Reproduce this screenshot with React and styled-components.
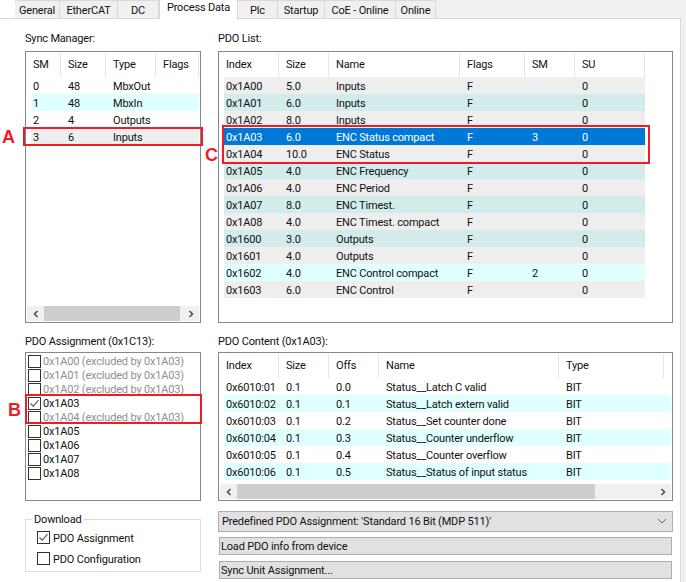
import React from "react";
import styled, { createGlobalStyle } from "styled-components";

const GlobalStyle = createGlobalStyle`
  html, body {
    margin: 0;
    padding: 0;
    background: #ffffff;
  }
  body {
    font-family: Roboto, "Noto Sans", sans-serif;
    font-size: 11px;
    letter-spacing: -0.18px;
    color: #111111;
  }
`;

const Page = styled.div`
  position: relative;
  width: 686px;
  height: 582px;
  overflow: hidden;
  background: #f0f0f0;
`;

const TabStrip = styled.div`
  display: flex;
  align-items: flex-start;
  height: 18px;
  padding-left: 15px;
  background: linear-gradient(to right, #ffffff 15px, #f0f0f0 15px);
`;

const Tab = styled.div`
  box-sizing: border-box;
  width: ${(p) => p.$w}px;
  height: 19px;
  line-height: ${(p) => (p.$active ? 16 : 19)}px;
  text-align: center;
  white-space: nowrap;
  background: ${(p) => (p.$active ? "#ffffff" : "#f0f0f0")};
  border: 1px solid #d9d9d9;
  border-left: ${(p) => (p.$active ? "1px solid #d9d9d9" : "none")};
  border-top: ${(p) => (p.$active ? "none" : "1px solid #d9d9d9")};
  border-bottom: ${(p) => (p.$active ? "none" : "1px solid #d9d9d9")};
  position: relative;
  z-index: ${(p) => (p.$active ? 2 : 1)};
`;

const Panel = styled.div`
  box-sizing: border-box;
  width: 681px;
  height: 564px;
  background: #ffffff;
  border-top: 1px solid #d9d9d9;
  border-right: 1px solid #d9d9d9;
  padding: 11px 7px 0 25px;
  display: grid;
  grid-template-columns: 176px 455px;
  column-gap: 17px;
  grid-template-rows: 293px 1fr;
  row-gap: 10px;
`;

const Section = styled.section`
  display: flex;
  flex-direction: column;
  min-width: 0;
`;

const Label = styled.div`
  height: 16px;
  line-height: 18px;
  margin-bottom: ${(p) => p.$gap}px;
  white-space: nowrap;
`;

const Box = styled.div`
  box-sizing: border-box;
  height: ${(p) => p.$h}px;
  background: #ffffff;
  border: 1px solid #828790;
  padding-left: 5px;
  display: flex;
  flex-direction: column;
  position: relative;
`;

const HeaderRow = styled.div`
  display: flex;
  height: 25px;
  padding-top: 1px;
  box-sizing: border-box;
  flex: none;
`;

const HeaderCell = styled.div`
  box-sizing: border-box;
  width: ${(p) => p.$w}px;
  padding-left: ${(p) => (p.$first ? 2 : 7)}px;
  line-height: 24px;
  height: 24px;
  border-right: 1px solid #e5e5e5;
  white-space: nowrap;
`;

const Rows = styled.div`
  flex: 1;
  min-height: 0;
`;

const Row = styled.div`
  display: flex;
  height: 17px;
  width: ${(p) => p.$w}px;
  line-height: 19px;
  background: ${(p) => p.$bg};
  color: ${(p) => (p.$selected ? "#ffffff" : "#111111")};
`;

const Cell = styled.div`
  box-sizing: border-box;
  width: ${(p) => p.$w}px;
  padding-left: ${(p) => (p.$first ? 2 : 7)}px;
  white-space: nowrap;
`;

const ScrollBar = styled.div`
  display: flex;
  align-items: stretch;
  height: 15px;
  margin: 0 1px 1px -4px;
  background: #f0f0f0;
  flex: none;
`;

const ScrollBtn = styled.div`
  width: 17px;
  display: flex;
  align-items: center;
  justify-content: center;
  flex: none;
`;

const Thumb = styled.div`
  background: #cdcdcd;
  width: ${(p) => p.$w}px;
  flex: none;
`;

const ScrollSpace = styled.div`
  flex: 1;
`;

const CheckList = styled.div`
  display: flex;
  flex-direction: column;
  padding-top: 1px;
  margin-left: -3px;
`;

const CheckItem = styled.div`
  display: flex;
  align-items: center;
  gap: 2px;
  height: 14px;
  white-space: nowrap;
  color: ${(p) => (p.$muted ? "#8f8f8f" : "#111111")};
`;

const CheckBox = styled.span`
  box-sizing: border-box;
  width: 13px;
  height: 13px;
  flex: none;
  border: 1px solid #333333;
  background: #ffffff;
  display: flex;
  align-items: center;
  justify-content: center;
`;

const RightStack = styled.div`
  display: flex;
  flex-direction: column;
  padding-top: 10px;
`;

const Combo = styled.div`
  box-sizing: border-box;
  height: 21px;
  background: #e1e1e1;
  border: 1px solid #adadad;
  display: flex;
  align-items: center;
  justify-content: space-between;
  padding: 0 5px 1px 3px;
  white-space: nowrap;
`;

const WideButton = styled.div`
  box-sizing: border-box;
  height: 18px;
  margin: ${(p) => p.$top}px 1px 0;
  background: #e1e1e1;
  border: 1px solid #adadad;
  line-height: 18px;
  padding-left: 1px;
  white-space: nowrap;
`;

const GroupBox = styled.fieldset`
  box-sizing: border-box;
  height: 61px;
  margin: 10px 0 0;
  padding: 1px 0 0 11px;
  border: 1px solid #dcdcdc;
  min-width: 0;
`;

const GroupTitle = styled.legend`
  padding: 2px 2px 0;
  margin-left: -5px;
  line-height: 14px;
`;

const GroupItem = styled.div`
  display: flex;
  align-items: center;
  gap: 3px;
  height: 21px;
  white-space: nowrap;

  ${CheckBox} {
    margin-top: -2px;
  }
`;

const Marker = styled.div`
  position: absolute;
  box-sizing: border-box;
  left: ${(p) => p.$x}px;
  top: ${(p) => p.$y}px;
  width: ${(p) => p.$w}px;
  height: ${(p) => p.$h}px;
  border: 2px solid #ee1c25;
  pointer-events: none;
`;

const MarkerLetter = styled.div`
  position: absolute;
  left: ${(p) => p.$x}px;
  top: ${(p) => p.$y}px;
  color: #ee1c25;
  font-family: "Liberation Sans", sans-serif;
  font-weight: bold;
  font-size: 18px;
  letter-spacing: 0;
  line-height: 18px;
`;

const WHITE = "#ffffff";
const CYAN = "#e0ffff";
const GREY = "#eeeeee";
const TEAL = "#d2ecec";
const BLUE = "#0078d7";

const syncCols = [30, 45, 50, 43];
const syncHead = ["SM", "Size", "Type", "Flags"];
const syncRows = [
  { bg: WHITE, c: ["0", "48", "MbxOut", ""] },
  { bg: CYAN, c: ["1", "48", "MbxIn", ""] },
  { bg: WHITE, c: ["2", "4", "Outputs", ""] },
  { bg: GREY, c: ["3", "6", "Inputs", ""] },
];

const pdoCols = [55, 50, 131, 65, 50, 70];
const pdoHead = ["Index", "Size", "Name", "Flags", "SM", "SU"];
const pdoRows = [
  { bg: GREY, c: ["0x1A00", "5.0", "Inputs", "F", "", "0"] },
  { bg: TEAL, c: ["0x1A01", "6.0", "Inputs", "F", "", "0"] },
  { bg: GREY, c: ["0x1A02", "8.0", "Inputs", "F", "", "0"] },
  { bg: BLUE, selected: true, c: ["0x1A03", "6.0", "ENC Status compact", "F", "3", "0"] },
  { bg: GREY, c: ["0x1A04", "10.0", "ENC Status", "F", "", "0"] },
  { bg: TEAL, c: ["0x1A05", "4.0", "ENC Frequency", "F", "", "0"] },
  { bg: GREY, c: ["0x1A06", "4.0", "ENC Period", "F", "", "0"] },
  { bg: TEAL, c: ["0x1A07", "8.0", "ENC Timest.", "F", "", "0"] },
  { bg: GREY, c: ["0x1A08", "4.0", "ENC Timest. compact", "F", "", "0"] },
  { bg: TEAL, c: ["0x1600", "3.0", "Outputs", "F", "", "0"] },
  { bg: GREY, c: ["0x1601", "4.0", "Outputs", "F", "", "0"] },
  { bg: CYAN, c: ["0x1602", "4.0", "ENC Control compact", "F", "2", "0"] },
  { bg: GREY, c: ["0x1603", "6.0", "ENC Control", "F", "", "0"] },
];

const contentCols = [55, 50, 50, 180, 105];
const contentHead = ["Index", "Size", "Offs", "Name", "Type"];
const contentRows = [
  ["0x6010:01", "0.1", "0.0", "Status__Latch C valid", "BIT"],
  ["0x6010:02", "0.1", "0.1", "Status__Latch extern valid", "BIT"],
  ["0x6010:03", "0.1", "0.2", "Status__Set counter done", "BIT"],
  ["0x6010:04", "0.1", "0.3", "Status__Counter underflow", "BIT"],
  ["0x6010:05", "0.1", "0.4", "Status__Counter overflow", "BIT"],
  ["0x6010:06", "0.1", "0.5", "Status__Status of input status", "BIT"],
].map((c, i) => ({ bg: i % 2 ? CYAN : WHITE, c }));

const assignments = [
  { id: "0x1A00", excluded: true },
  { id: "0x1A01", excluded: true },
  { id: "0x1A02", excluded: true },
  { id: "0x1A03", checked: true },
  { id: "0x1A04", excluded: true },
  { id: "0x1A05" },
  { id: "0x1A06" },
  { id: "0x1A07" },
  { id: "0x1A08" },
];

const tabs = [
  ["General", 45],
  ["EtherCAT", 58],
  ["DC", 41],
  ["Process Data", 79, true],
  ["Plc", 40],
  ["Startup", 47],
  ["CoE - Online", 71],
  ["Online", 40],
];

const CHEVRONS = {
  left: "M5.5 1 L2.5 4 L5.5 7",
  right: "M2.5 1 L5.5 4 L2.5 7",
};

const Chevron = ({ dir }) => (
  <svg width="8" height="8" viewBox="0 0 8 8">
    <path d={CHEVRONS[dir]} fill="none" stroke="#505050" strokeWidth="1.6" />
  </svg>
);

const ComboArrow = () => (
  <svg width="10" height="6" viewBox="0 0 10 6">
    <path d="M1 1 L5 5 L9 1" fill="none" stroke="#606060" strokeWidth="1" />
  </svg>
);

const Tick = () => (
  <svg width="11" height="11" viewBox="0 0 11 11">
    <path d="M1.5 5.5 L4.2 8.2 L9.5 2.2" fill="none" stroke="#555555" strokeWidth="1.1" />
  </svg>
);

const Scroll = ({ thumb }) => (
  <ScrollBar>
    <ScrollBtn>
      <Chevron dir="left" />
    </ScrollBtn>
    <Thumb $w={thumb} />
    <ScrollSpace />
    <ScrollBtn>
      <Chevron dir="right" />
    </ScrollBtn>
  </ScrollBar>
);

const ListTable = ({ cols, head, rows, rowWidth, height, thumb }) => (
  <Box $h={height}>
    <HeaderRow>
      {head.map((h, i) => (
        <HeaderCell key={h} $w={cols[i]} $first={i === 0}>
          {h}
        </HeaderCell>
      ))}
    </HeaderRow>
    <Rows>
      {rows.map((r) => (
        <Row key={r.c[0]} $w={rowWidth} $bg={r.bg} $selected={r.selected}>
          {r.c.map((v, i) => (
            <Cell key={i} $w={cols[i]} $first={i === 0}>
              {v}
            </Cell>
          ))}
        </Row>
      ))}
    </Rows>
    {thumb > 0 && <Scroll thumb={thumb} />}
  </Box>
);

export default function App() {
  return (
    <Page>
      <GlobalStyle />
      <TabStrip>
        {tabs.map(([name, w, active]) => (
          <Tab key={name} $w={w} $active={active}>
            {name}
          </Tab>
        ))}
      </TabStrip>
      <Panel>
        <Section>
          <Label $gap={5}>Sync Manager:</Label>
          <ListTable cols={syncCols} head={syncHead} rows={syncRows} rowWidth={168} height={272} thumb={136} />
        </Section>
        <Section>
          <Label $gap={5}>PDO List:</Label>
          <ListTable cols={pdoCols} head={pdoHead} rows={pdoRows} rowWidth={421} height={272} />
        </Section>
        <Section>
          <Label $gap={3}>PDO Assignment (0x1C13):</Label>
          <Box $h={149}>
            <CheckList>
              {assignments.map((a) => (
                <CheckItem key={a.id} $muted={a.excluded}>
                  <CheckBox>{a.checked && <Tick />}</CheckBox>
                  {a.excluded ? `${a.id} (excluded by 0x1A03)` : a.id}
                </CheckItem>
              ))}
            </CheckList>
          </Box>
          <GroupBox>
            <GroupTitle>Download</GroupTitle>
            <GroupItem>
              <CheckBox>
                <Tick />
              </CheckBox>
              PDO Assignment
            </GroupItem>
            <GroupItem>
              <CheckBox />
              PDO Configuration
            </GroupItem>
          </GroupBox>
        </Section>
        <Section>
          <Label $gap={3}>PDO Content (0x1A03):</Label>
          <ListTable cols={contentCols} head={contentHead} rows={contentRows} rowWidth={447} height={149} thumb={358} />
          <RightStack>
            <Combo>
              Predefined PDO Assignment: 'Standard 16 Bit (MDP 511)'
              <ComboArrow />
            </Combo>
            <WideButton $top={5}>Load PDO info from device</WideButton>
            <WideButton $top={6}>Sync Unit Assignment...</WideButton>
          </RightStack>
        </Section>
      </Panel>
      <Marker $x={23} $y={127} $w={180} $h={19} />
      <Marker $x={222} $y={125} $w={428} $h={39} />
      <Marker $x={25} $y={394} $w={177} $h={30} />
      <MarkerLetter $x={2} $y={128}>A</MarkerLetter>
      <MarkerLetter $x={8} $y={401}>B</MarkerLetter>
      <MarkerLetter $x={205} $y={146}>C</MarkerLetter>
    </Page>
  );
}
